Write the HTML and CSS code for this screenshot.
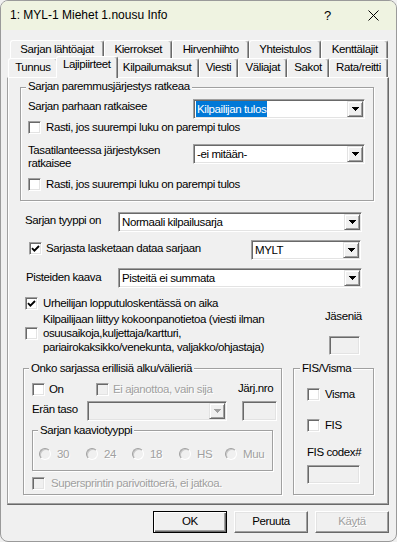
FILE: index.html
```html
<!DOCTYPE html>
<html lang="fi">
<head>
<meta charset="utf-8">
<title>Info</title>
<link rel="stylesheet" href="styles.css">
</head>
<body>
<div class="window">
  <div class="titlebar">
    <span class="title">1: MYL-1 Miehet 1.nousu Info</span>
    <span class="help">?</span>
    <svg class="close" width="11" height="11" viewBox="0 0 11 11"><path d="M0.5 0.5L10.5 10.5M10.5 0.5L0.5 10.5" stroke="#000" stroke-width="1" fill="none"/></svg>
  </div>
  <div class="client">
    <div class="tabrow row1">
      <div class="tab">Sarjan lähtöajat</div>
      <div class="tab">Kierrokset</div>
      <div class="tab">Hirvenhiihto</div>
      <div class="tab">Yhteistulos</div>
      <div class="tab">Kenttälajit</div>
    </div>
    <div class="tabrow row2">
      <div class="tab">Tunnus</div>
      <div class="tab sel">Lajipiirteet</div>
      <div class="tab">Kilpailumaksut</div>
      <div class="tab">Viesti</div>
      <div class="tab">Väliajat</div>
      <div class="tab">Sakot</div>
      <div class="tab">Rata/reitti</div>
    </div>
    <div class="panel">
      <div class="gb gb1">
        <div class="gb-title">Sarjan paremmusjärjestys ratkeaa</div>
        <div class="row ra">
          <div class="lbl w165">Sarjan parhaan ratkaisee</div>
          <div class="combo w172"><span class="ctext"><span class="hl">Kilpailijan tulos</span></span><span class="dd"><svg width="7" height="4" viewBox="0 0 7 4"><path d="M0 0H7V1H6V2H5V3H4V4H3V3H2V2H1V1H0Z"/></svg></span></div>
        </div>
        <div class="chk rb"><span class="cb"></span><span class="ct">Rasti, jos suurempi luku on parempi tulos</span></div>
        <div class="row rc">
          <div class="lbl lbl2 w165">Tasatilanteessa järjestyksen<br>ratkaisee</div>
          <div class="combo w172"><span class="ctext">-ei mitään-</span><span class="dd"><svg width="7" height="4" viewBox="0 0 7 4"><path d="M0 0H7V1H6V2H5V3H4V4H3V3H2V2H1V1H0Z"/></svg></span></div>
        </div>
        <div class="chk rd"><span class="cb"></span><span class="ct">Rasti, jos suurempi luku on parempi tulos</span></div>
      </div>

      <div class="row r2">
        <div class="lbl lbl-off1 w93">Sarjan tyyppi on</div>
        <div class="combo w244"><span class="ctext">Normaali kilpailusarja</span><span class="dd"><svg width="7" height="4" viewBox="0 0 7 4"><path d="M0 0H7V1H6V2H5V3H4V4H3V3H2V2H1V1H0Z"/></svg></span></div>
      </div>

      <div class="row r3">
        <div class="chk chk-off2 w222"><span class="cb"><svg class="tick" width="9" height="9" viewBox="0 0 9 9"><path d="M1 4.2L3.4 6.6L8 2" stroke="#000" stroke-width="1.9" fill="none"/></svg></span><span class="ct gap4">Sarjasta lasketaan dataa sarjaan</span></div>
        <div class="combo w110"><span class="ctext">MYLT</span><span class="dd"><svg width="7" height="4" viewBox="0 0 7 4"><path d="M0 0H7V1H6V2H5V3H4V4H3V3H2V2H1V1H0Z"/></svg></span></div>
      </div>

      <div class="row r4">
        <div class="lbl lbl-off2 w92">Pisteiden kaava</div>
        <div class="combo w244"><span class="ctext">Pisteitä ei summata</span><span class="dd"><svg width="7" height="4" viewBox="0 0 7 4"><path d="M0 0H7V1H6V2H5V3H4V4H3V3H2V2H1V1H0Z"/></svg></span></div>
      </div>

      <div class="chk r5"><span class="cb"><svg class="tick" width="9" height="9" viewBox="0 0 9 9"><path d="M1 4.2L3.4 6.6L8 2" stroke="#000" stroke-width="1.9" fill="none"/></svg></span><span class="ct">Urheilijan lopputuloskentässä on aika</span></div>

      <div class="row r6">
        <span class="cb mid"></span>
        <div class="multi">Kilpailijaan liittyy kokoonpanotietoa (viesti ilman<br>osuusaikoja,kuljettaja/kartturi,<br>pariairokaksikko/venekunta, valjakko/ohjastaja)</div>
        <div class="jcol">
          <div class="lbl">Jäseniä</div>
          <div class="edit jedit"></div>
        </div>
      </div>

      <div class="row r7">
        <div class="gb gb2">
          <div class="gb-title gt8">Onko sarjassa erillisiä alku/välieriä</div>
          <div class="row g2r1">
            <div class="chk w64"><span class="cb"></span><span class="ct gap4">On</span></div>
            <div class="chk w142"><span class="cb off"></span><span class="ct gap4 dis">Ei ajanottoa, vain sija</span></div>
            <div class="lbl jnro">Järj.nro</div>
          </div>
          <div class="row g2r2">
            <div class="lbl lbl-off1 w55">Erän taso</div>
            <div class="combo off w140"><span class="ctext"></span><span class="dd"><svg width="7" height="4" viewBox="0 0 7 4"><path d="M0 0H7V1H6V2H5V3H4V4H3V3H2V2H1V1H0Z" fill="#a0a0a0"/></svg></span></div>
            <div class="edit nedit"></div>
          </div>
          <div class="gb gb3">
            <div class="gb-title gt8">Sarjan kaaviotyyppi</div>
            <div class="row radios">
              <div class="radio w47"><span class="rdo"></span><span class="rt dis">30</span></div>
              <div class="radio w46"><span class="rdo"></span><span class="rt dis">24</span></div>
              <div class="radio w47"><span class="rdo"></span><span class="rt dis">18</span></div>
              <div class="radio w46"><span class="rdo"></span><span class="rt dis">HS</span></div>
              <div class="radio"><span class="rdo"></span><span class="rt dis">Muu</span></div>
            </div>
          </div>
          <div class="chk sprint"><span class="cb off"></span><span class="ct gap6 dis">Supersprintin parivoittoerä, ei jatkoa.</span></div>
        </div>

        <div class="gb gbfis">
          <div class="gb-title gt8 gt6">FIS/Visma</div>
          <div class="chk fis1"><span class="cb"></span><span class="ct">Visma</span></div>
          <div class="chk fis2"><span class="cb"></span><span class="ct">FIS</span></div>
          <div class="lbl codex">FIS codex#</div>
          <div class="edit cedit"></div>
        </div>
      </div>
    </div>

    <div class="buttons">
      <div class="btn def">OK</div>
      <div class="btn">Peruuta</div>
      <div class="btn dis">Kä<u>y</u>tä</div>
    </div>
  </div>
</div>
</body>
</html>
```

FILE: styles.css
```css
* { box-sizing: border-box; }
html, body { margin: 0; padding: 0; }
body {
  background: #f0f0f0;
  font-family: "Liberation Sans", Arial, sans-serif;
  font-size: 11.5px;
  letter-spacing: -0.4px;
  color: #000;
}
.window {
  width: 397px;
  height: 542px;
  border: 1px solid #9a9a9a;
  border-radius: 8px;
  overflow: hidden;
  background: #f0f0f0;
}
.titlebar {
  height: 29px;
  background: #eff3e1;
  display: flex;
  align-items: center;
  font-size: 12px;
  letter-spacing: 0;
}
.title { flex: 1; margin-left: 9px; line-height: 29px; white-space: nowrap; }
.help { width: 7px; margin-right: 37px; font-size: 13px; line-height: 29px; text-align: center; }
.close { margin-right: 17px; display: block; }

.client { padding: 10px 0 0 6px; }

.tabrow { display: flex; }
.row1 { margin-left: 3px; width: 378px; height: 18px; }
.row2 { margin-left: 1px; width: 380px; height: 19px; }
.tab {
  flex: 1 1 auto;
  text-align: center;
  white-space: nowrap;
  padding: 1px 3px 0;
  line-height: 14px;
  background: #f0f0f0;
  border: 1px solid;
  border-color: #fff #696969 transparent #fff;
  border-bottom: 0;
  border-radius: 3px 3px 0 0;
  box-shadow: inset -1px 0 0 #a0a0a0;
}
.tab.sel {
  margin: -2px -2px -1px;
  padding-top: 0;
  position: relative;
  z-index: 1;
}

.panel {
  width: 382px;
  height: 428px;
  border: 1px solid;
  border-color: #fff #696969 #696969 #a0a0a0;
  box-shadow: inset -1px -1px 0 #a0a0a0, inset 1px 0 0 #fff;
}

.gb {
  border: 1px solid #a0a0a0;
  box-shadow: 1px 1px 0 #fff, inset 1px 1px 0 #fff;
}
.gb-title {
  display: table;
  background: #f0f0f0;
  padding: 0 2px;
  line-height: 14px;
  margin: -9px 0 0 5px;
  white-space: nowrap;
}
.gt8 { margin-top: -8px; }
.gt6 { margin-left: 6px; }

.row { display: flex; align-items: flex-start; }
.lbl { line-height: 14px; white-space: nowrap; flex: none; }
.lbl2 { line-height: 13px; }
.lbl-off1 { margin-top: 1px; }
.lbl-off2 { margin-top: 2px; }

.w165 { width: 165px; }
.w172 { width: 172px; }
.w93 { width: 93px; }
.w92 { width: 92px; }
.w244 { width: 244px; }
.w222 { width: 222px; }
.w110 { width: 110px; }
.w64 { width: 64px; }
.w142 { width: 142px; }
.w55 { width: 55px; }
.w140 { width: 140px; }
.w47 { width: 47px; }
.w46 { width: 46px; }

.combo {
  flex: none;
  height: 20px;
  display: flex;
  padding: 1px;
  background: #fff;
  border: 1px solid;
  border-color: #a0a0a0 #fff #fff #a0a0a0;
  box-shadow: inset 1px 1px 0 #696969, inset -1px -1px 0 #e3e3e3;
}
.combo.off { background: #f0f0f0; }
.ctext {
  flex: 1;
  line-height: 16px;
  padding-left: 2px;
  white-space: nowrap;
  overflow: hidden;
}
.hl {
  display: inline-block;
  margin-left: -1px;
  padding: 0 1px;
  background: #0078d7;
  color: #fff;
}
.dd {
  flex: none;
  width: 16px;
  height: 16px;
  display: flex;
  align-items: center;
  justify-content: center;
  background: #f0f0f0;
  border: 1px solid;
  border-color: #e3e3e3 #696969 #696969 #e3e3e3;
  box-shadow: inset 1px 1px 0 #fff, inset -1px -1px 0 #a0a0a0;
}
.dd svg { display: block; }

.edit {
  flex: none;
  background: #f0f0f0;
  border: 1px solid;
  border-color: #a0a0a0 #fff #fff #a0a0a0;
  box-shadow: inset 1px 1px 0 #696969, inset -1px -1px 0 #e3e3e3;
}

.chk { display: flex; align-items: flex-start; flex: none; }
.cb {
  flex: none;
  width: 13px;
  height: 13px;
  display: flex;
  align-items: center;
  justify-content: center;
  background: #fff;
  border: 1px solid;
  border-color: #a0a0a0 #fff #fff #a0a0a0;
  box-shadow: inset 1px 1px 0 #696969, inset -1px -1px 0 #e3e3e3;
}
.cb.off { background: #f0f0f0; }
.tick { display: block; }
.ct { line-height: 13px; margin-left: 5px; white-space: nowrap; }
.gap4 { margin-left: 4px; }
.gap6 { margin-left: 6px; }
.dis { color: #a0a0a0; text-shadow: 1px 1px 0 #fff; }

.ra { margin: 6px 0 0 7px; }
.rb { margin: 2px 0 0 7px; }
.rc { margin: 10px 0 0 7px; }
.rd { margin: 8px 0 0 7px; }
.gb1 { margin: 9px 0 0 12px; width: 354px; height: 114px; }

.r2 { margin: 11px 0 0 17px; }
.r3 { margin: 8px 0 0 21px; }
.chk-off2 { margin-top: 2px; }
.r4 { margin: 8px 0 0 18px; }
.r5 { margin: 9px 0 0 17px; }
.r6 { margin: 2px 0 0 17px; }
.mid { align-self: center; }
.multi { flex: 1; margin-left: 5px; line-height: 14px; white-space: nowrap; }
.jcol { flex: none; width: 35px; margin: -3px 28px 0 0; }
.jedit { width: 31px; height: 19px; margin: 13px 0 0 4px; }

.r7 { margin: 13px 0 0 15px; }
.gb2 { width: 259px; height: 127px; flex: none; }
.gbfis { width: 81px; height: 127px; margin-left: 11px; flex: none; }

.g2r1 { margin: 8px 0 0 8px; }
.jnro { line-height: 13px; margin-top: -1px; }
.g2r2 { margin: 5px 0 0 8px; }
.nedit { width: 35px; height: 20px; margin-left: 15px; }
.gb3 { margin: 9px 0 0 8px; width: 241px; height: 41px; }
.radios { margin: 11px 0 0 6px; }
.radio { display: flex; align-items: flex-start; flex: none; }
.rdo {
  flex: none;
  width: 12px;
  height: 12px;
  border-radius: 50%;
  background: #f0f0f0;
  border: 1px solid;
  border-color: #a0a0a0 #fff #fff #a0a0a0;
  box-shadow: inset 1px 1px 0 #c8c8c8;
}
.rt { margin-left: 6px; line-height: 12px; white-space: nowrap; }
.sprint { margin: 6px 0 0 8px; }

.fis1 { margin: 13px 0 0 13px; }
.fis2 { margin: 18px 0 0 13px; }
.codex { margin: 13px 0 0 13px; }
.cedit { width: 53px; height: 19px; margin: 6px 0 0 13px; }

.buttons {
  display: flex;
  justify-content: flex-end;
  gap: 7px;
  margin-top: 6px;
  padding-right: 7px;
}
.btn {
  width: 74px;
  height: 22px;
  line-height: 18px;
  text-align: center;
  background: #f0f0f0;
  border: 1px solid;
  border-color: #fff #696969 #696969 #fff;
  box-shadow: inset -1px -1px 0 #a0a0a0, inset 1px 1px 0 #e3e3e3;
}
.btn.def {
  border-color: #000;
  box-shadow: inset 1px 1px 0 #fff, inset -1px -1px 0 #696969, inset -2px -2px 0 #a0a0a0;
}
.btn u { text-decoration: underline; }
```
